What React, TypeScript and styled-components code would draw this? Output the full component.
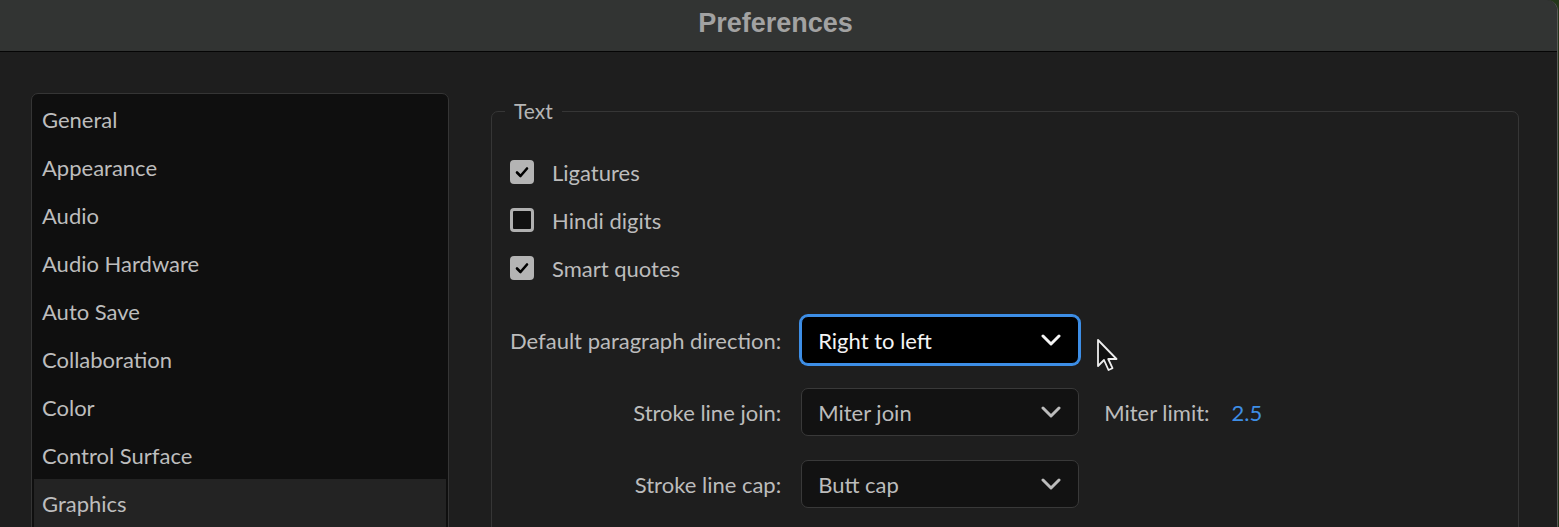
import React from "react";
import styled, { createGlobalStyle } from "styled-components";

const GlobalStyle = createGlobalStyle`
  html, body {
    margin: 0;
    padding: 0;
    background: #24361a;
    overflow: hidden;
  }
`;

const navItems = [
  "General",
  "Appearance",
  "Audio",
  "Audio Hardware",
  "Auto Save",
  "Collaboration",
  "Color",
  "Control Surface",
  "Graphics",
];

const checks = [
  { label: "Ligatures", checked: true },
  { label: "Hindi digits", checked: false },
  { label: "Smart quotes", checked: true },
];

function Chevron() {
  return (
    <svg width="20" height="12" viewBox="0 0 20 12">
      <polyline
        points="2,2 10,10 18,2"
        fill="none"
        stroke="currentColor"
        strokeWidth="3"
        strokeLinecap="round"
        strokeLinejoin="round"
      />
    </svg>
  );
}

function Check() {
  return (
    <svg width="16" height="16" viewBox="0 0 16 16">
      <polyline
        points="3,8.5 6.5,12 13,4.5"
        fill="none"
        stroke="#000"
        strokeWidth="2.6"
        strokeLinecap="round"
        strokeLinejoin="round"
      />
    </svg>
  );
}

function Select({ value, focused }: { value: string; focused?: boolean }) {
  return (
    <SelectBox $focused={focused}>
      <span>{value}</span>
      <Chevron />
    </SelectBox>
  );
}

export default function App() {
  return (
    <>
      <GlobalStyle />
      <Window>
        <TitleBar>Preferences</TitleBar>
        <Body>
          <Sidebar>
            {navItems.map((item) => (
              <NavItem key={item} $active={item === "Graphics"}>
                {item}
              </NavItem>
            ))}
          </Sidebar>
          <Content>
            <GroupBox>
              <Legend>Text</Legend>
              {checks.map((c) => (
                <CheckRow key={c.label}>
                  <CheckBox $checked={c.checked}>{c.checked && <Check />}</CheckBox>
                  <Label>{c.label}</Label>
                </CheckRow>
              ))}
              <FormGrid>
                <FieldLabel>Default paragraph direction:</FieldLabel>
                <Select value="Right to left" focused />
                <span />
                <FieldLabel>Stroke line join:</FieldLabel>
                <Select value="Miter join" />
                <Inline>
                  <Label>Miter limit:</Label>
                  <LinkValue>2.5</LinkValue>
                </Inline>
                <FieldLabel>Stroke line cap:</FieldLabel>
                <Select value="Butt cap" />
                <span />
              </FormGrid>
            </GroupBox>
          </Content>
        </Body>
        <Cursor width="24" height="36" viewBox="0 0 24 36">
          <path
            d="M2 2 L2 28 L8 22 L12.5 32 L16.5 30.2 L12.2 21 L20.5 21 Z"
            fill="#111"
            stroke="#eee"
            strokeWidth="1.8"
            strokeLinejoin="round"
          />
        </Cursor>
      </Window>
    </>
  );
}

const Window = styled.div`
position: relative;
width: 1557px;
height: 527px;
background: #1e1e1e;
border-right: 1px solid #5a5a5a;
border-top-right-radius: 11px;
overflow: hidden;
font-family: "Lato", "Liberation Sans", sans-serif;
`;

const TitleBar = styled.div`
height: 52px;
box-sizing: border-box;
padding: 0 6px 5px 0;
background: #323433;
border-bottom: 1px solid #050505;
display: flex;
align-items: center;
justify-content: center;
font-family: "Liberation Sans", Arial, sans-serif;
font-weight: bold;
font-size: 27px;
color: #a2a2a2;
`;

const Body = styled.div`
display: flex;
align-items: flex-start;
gap: 42px;
padding: 41px 38px 0 31px;
`;

const Sidebar = styled.div`
width: 418px;
height: 460px;
flex-shrink: 0;
box-sizing: border-box;
background: #0f0f0f;
border: 1px solid #353535;
border-radius: 7px;
padding: 1px 2px;
`;

const NavItem = styled.div<{ $active?: boolean }>`
height: 48px;
display: flex;
align-items: center;
padding-left: 8px;
font-size: 22px;
color: #bdbdbd;
background: ${(p) => (p.$active ? "#232323" : "transparent")};
`;

const Content = styled.div`
flex: 1;
padding-top: 6px;
`;

const GroupBox = styled.fieldset`
margin: 0;
min-height: 480px;
border: 1px solid #363636;
border-radius: 7px;
padding: 25px 18px 0 18px;
`;

const Legend = styled.legend`
margin-left: -5px;
padding: 0 9px;
font-size: 21px;
line-height: 24px;
color: #b5b5b5;
`;

const CheckRow = styled.div`
height: 48px;
display: flex;
align-items: center;
gap: 18px;
`;

const CheckBox = styled.div<{ $checked?: boolean }>`
width: 24px;
height: 24px;
box-sizing: border-box;
border-radius: 4px;
display: flex;
align-items: center;
justify-content: center;
background: ${(p) => (p.$checked ? "#b4b4b4" : "#111")};
border: ${(p) => (p.$checked ? "none" : "3px solid #b0b0b0")};
`;

const Label = styled.span`
font-size: 22px;
color: #bcbcbc;
`;

const FormGrid = styled.div`
display: grid;
grid-template-columns: max-content 278px max-content;
justify-content: start;
column-gap: 19px;
row-gap: 24px;
align-items: center;
margin-top: 24px;
`;

const FieldLabel = styled(Label)`
justify-self: end;
padding-right: 1px;
`;

const SelectBox = styled.div<{ $focused?: boolean }>`
height: 48px;
box-sizing: border-box;
display: flex;
align-items: center;
justify-content: space-between;
padding: 0 17px 0 16px;
border-radius: 7px;
font-size: 22px;
background: ${(p) => (p.$focused ? "#000" : "#121212")};
color: ${(p) => (p.$focused ? "#f4f4f4" : "#bcbcbc")};
border: 1px solid ${(p) => (p.$focused ? "#3d8ee6" : "#393939")};
box-shadow: ${(p) => (p.$focused ? "0 0 0 2px #3d8ee6" : "none")};
`;

const Inline = styled.div`
display: flex;
align-items: center;
gap: 22px;
margin-left: 6px;
`;

const LinkValue = styled.span`
font-size: 22px;
color: #3e8ee6;
`;

const Cursor = styled.svg`
position: absolute;
left: 1096px;
top: 338px;
`;
